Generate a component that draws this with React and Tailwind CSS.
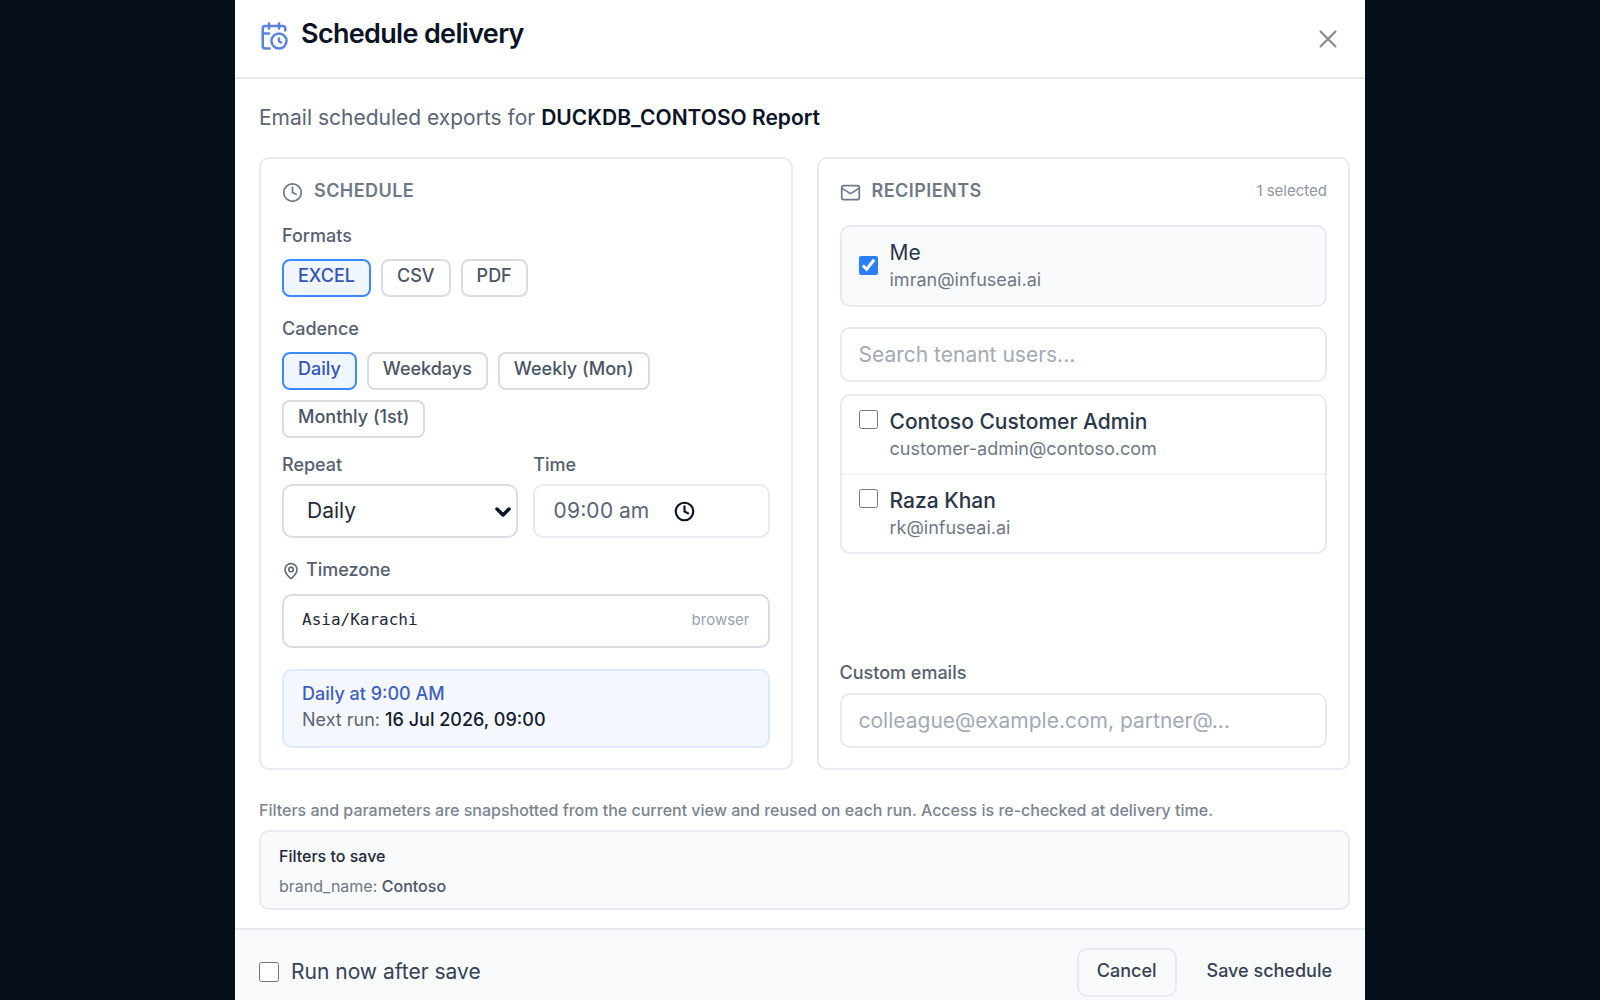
import { useState } from "react";
import { CalendarClock, ChevronDown, Clock, Mail, MapPin, X } from "lucide-react";

const FORMATS = ["EXCEL", "CSV", "PDF"];
const CADENCES = ["Daily", "Weekdays", "Weekly (Mon)", "Monthly (1st)"];
const USERS = [
  { name: "Contoso Customer Admin", email: "customer-admin@contoso.com" },
  { name: "Raza Khan", email: "rk@infuseai.ai" },
];

function Chip({ active, onClick, children }) {
  return (
    <button
      type="button"
      aria-pressed={active}
      onClick={onClick}
      className={
        "rounded-lg border-2 px-[14px] pt-1 pb-2 text-lg leading-[22px] font-medium " +
        (active
          ? "border-[#3b8bff] bg-[#eff6ff] text-[#3454b4]"
          : "border-[#d9dce3] bg-white text-[#4b5565]")
      }
    >
      {children}
    </button>
  );
}

function PanelTitle({ icon: Icon, children }) {
  return (
    <h2 className="flex items-center gap-[11px] text-lg leading-6 font-semibold tracking-wide text-[#6f7887]">
      <Icon className="mt-[3px] size-[21px]" strokeWidth={2} />
      {children}
    </h2>
  );
}

function UserRow({ name, email }) {
  return (
    <label className="flex gap-3 px-[17px] pt-3 pb-3">
      <input type="checkbox" className="mt-[2px] size-[19px] shrink-0 accent-[#2b7fff]" />
      <span className="flex flex-col">
        <span className="text-[21px] leading-7 font-medium text-[#2b3648]">{name}</span>
        <span className="text-lg leading-[25px] text-[#6f7887]">{email}</span>
      </span>
    </label>
  );
}

const PANEL = "flex min-w-0 flex-col rounded-[10px] border-2 border-[#e8eaef] px-[21px] pt-5 pb-5";
const LABEL = "text-lg leading-6 font-medium text-[#566070]";
const TEXT_INPUT =
  "h-[55px] w-full rounded-[10px] border-2 border-[#e8eaef] bg-white px-[17px] text-[21px] text-[#4b5565] outline-none placeholder:text-[#a3a9b5]";

export default function App() {
  const [formats, setFormats] = useState(["EXCEL"]);
  const [cadence, setCadence] = useState("Daily");

  const toggleFormat = (f) =>
    setFormats((cur) => (cur.includes(f) ? cur.filter((x) => x !== f) : [...cur, f]));

  return (
    <div className="flex min-h-screen justify-center bg-[#070e1c] font-['Inter',sans-serif]">
      <div role="dialog" aria-labelledby="dialog-title" className="flex w-full max-w-[1130px] flex-col bg-white">
        <header className="flex h-[79px] items-center justify-between border-b-2 border-[#e5e8ed] pr-[22px] pl-6">
          <div className="flex items-center gap-3 pb-[6px]">
            <CalendarClock className="size-[30px] text-[#5b83dc]" strokeWidth={2} />
            <h1 id="dialog-title" className="pb-1 text-[27px] leading-8 font-semibold tracking-tight text-[#0b1324]">
              Schedule delivery
            </h1>
          </div>
          <button type="button" aria-label="Close" className="text-[#7c8492]">
            <X className="size-[30px]" strokeWidth={1.5} />
          </button>
        </header>

        <main className="flex flex-1 flex-col pr-[15px] pb-[18px] pl-6">
          <p className="pt-6 text-[21px] leading-[30px] text-[#5b6474]">
            Email scheduled exports for{" "}
            <strong className="font-semibold text-[#0b1324]">DUCKDB_CONTOSO Report</strong>
          </p>

          <div className="mt-6 grid grid-cols-2 gap-6">
            <section className={PANEL}>
              <PanelTitle icon={Clock}>SCHEDULE</PanelTitle>

              <div role="group" aria-labelledby="formats" className="mt-[21px]">
                <div id="formats" className={LABEL}>Formats</div>
                <div className="mt-[11px] flex flex-wrap gap-[10px]">
                  {FORMATS.map((f) => (
                    <Chip key={f} active={formats.includes(f)} onClick={() => toggleFormat(f)}>
                      {f}
                    </Chip>
                  ))}
                </div>
              </div>

              <div role="group" aria-labelledby="cadence" className="mt-5">
                <div id="cadence" className={LABEL}>Cadence</div>
                <div className="mt-[11px] flex flex-wrap gap-[10px]">
                  {CADENCES.map((c) => (
                    <Chip key={c} active={cadence === c} onClick={() => setCadence(c)}>
                      {c}
                    </Chip>
                  ))}
                </div>
              </div>

              <div className="mt-[15px] grid grid-cols-2 gap-[15px]">
                <div>
                  <label htmlFor="repeat" className={LABEL + " block"}>Repeat</label>
                  <div className="relative mt-[7px]">
                    <select
                      id="repeat"
                      className="h-[54px] w-full appearance-none rounded-[10px] border-2 border-[#d9dce3] bg-white px-[23px] text-[21px] text-[#1e2939] outline-none"
                    >
                      <option>Daily</option>
                      <option>Weekly</option>
                      <option>Monthly</option>
                    </select>
                    <ChevronDown
                      className="pointer-events-none absolute top-4 right-[3px] size-6 text-[#0b1324]"
                      strokeWidth={3.5}
                    />
                  </div>
                </div>
                <div>
                  <label htmlFor="time" className={LABEL + " block"}>Time</label>
                  <div className="mt-[7px] flex h-[54px] items-center rounded-[10px] border-2 border-[#e8eaef] pl-[18px]">
                    <input
                      id="time"
                      defaultValue="09:00 am"
                      className="w-[121px] bg-transparent text-[21px] text-[#5b6474] tabular-nums outline-none"
                    />
                    <button type="button" aria-label="Pick a time" className="text-[#0b1324]">
                      <Clock className="size-[21px]" strokeWidth={2.5} />
                    </button>
                  </div>
                </div>
              </div>

              <label htmlFor="timezone" className={LABEL + " mt-5 flex items-center gap-[6px]"}>
                <MapPin className="mt-[2px] size-[18px]" strokeWidth={2} />
                Timezone
              </label>
              <div className="mt-3 flex h-[54px] items-center justify-between rounded-[10px] border-2 border-[#d9dce3] px-[18px] pb-[2px]">
                <input
                  id="timezone"
                  readOnly
                  value="Asia/Karachi"
                  className="min-w-0 flex-1 bg-transparent font-['DejaVu_Sans_Mono',monospace] text-base text-[#1e2939] outline-none"
                />
                <span className="text-[15px] text-[#9aa1ae]">browser</span>
              </div>

              <div className="mt-[21px] rounded-[10px] border-2 border-[#dbeafe] bg-[#f4f8fe] px-[18px] pt-[10px] pb-[13px] text-lg leading-[26px]">
                <p className="font-medium text-[#3f5fc0]">Daily at 9:00 AM</p>
                <p className="text-[#5b6474]">
                  Next run: <span className="font-medium text-[#131c2e]">16 Jul 2026, 09:00</span>
                </p>
              </div>
            </section>

            <section className={PANEL}>
              <div className="flex items-center justify-between">
                <PanelTitle icon={Mail}>RECIPIENTS</PanelTitle>
                <span className="text-[15px] leading-6 text-[#8f96a4]">1 selected</span>
              </div>

              <label className="mt-[22px] flex items-center gap-3 rounded-[10px] border-2 border-[#e8eaef] bg-[#f9fafb] px-[17px] pt-3 pb-[13px]">
                <input type="checkbox" defaultChecked className="size-[19px] shrink-0 accent-[#2b7fff]" />
                <span className="flex flex-col">
                  <span className="text-[21px] leading-7 text-[#2b3648]">Me</span>
                  <span className="text-lg leading-[25px] text-[#6f7887]">imran@infuseai.ai</span>
                </span>
              </label>

              <input
                type="text"
                aria-label="Search tenant users"
                placeholder="Search tenant users..."
                className={TEXT_INPUT + " mt-5"}
              />

              <div className="mt-3 divide-y-2 divide-[#f3f4f6] rounded-[10px] border-2 border-[#e8eaef]">
                {USERS.map((u) => (
                  <UserRow key={u.email} {...u} />
                ))}
              </div>

              <div className="mt-auto">
                <label htmlFor="emails" className={LABEL + " block"}>Custom emails</label>
                <input
                  id="emails"
                  type="text"
                  placeholder="colleague@example.com, partner@..."
                  className={TEXT_INPUT + " mt-2"}
                />
              </div>
            </section>
          </div>

          <p className="mt-7 text-base leading-6 font-medium text-[#7b8391]">
            Filters and parameters are snapshotted from the current view and reused on each run. Access is re-checked
            at delivery time.
          </p>

          <div className="mt-2 rounded-[10px] border-2 border-[#e8eaef] bg-[#f9fafb] px-[18px] pt-3 pb-[10px] text-base leading-6">
            <p className="font-medium text-[#1e2939]">Filters to save</p>
            <p className="mt-[6px] text-[#6f7887]">
              brand_name: <span className="font-medium text-[#4b5565]">Contoso</span>
            </p>
          </div>
        </main>

        <footer className="flex items-center justify-between border-t-2 border-[#e5e8ed] bg-[#f9fafb] pt-[18px] pr-[15px] pb-[3px] pl-6">
          <label className="flex items-center gap-3 pb-[2px] text-[21px] leading-7 text-[#364153]">
            <input type="checkbox" className="size-5 accent-[#2b7fff]" />
            Run now after save
          </label>
          <div className="flex gap-3">
            <button
              type="button"
              className="rounded-[10px] border-2 border-[#e8eaef] px-[18px] pt-[9px] pb-3 text-lg leading-6 font-medium text-[#364153]"
            >
              Cancel
            </button>
            <button type="button" className="px-[18px] pt-[9px] pb-3 text-lg leading-6 font-medium text-[#364153]">
              Save schedule
            </button>
          </div>
        </footer>
      </div>
    </div>
  );
}
